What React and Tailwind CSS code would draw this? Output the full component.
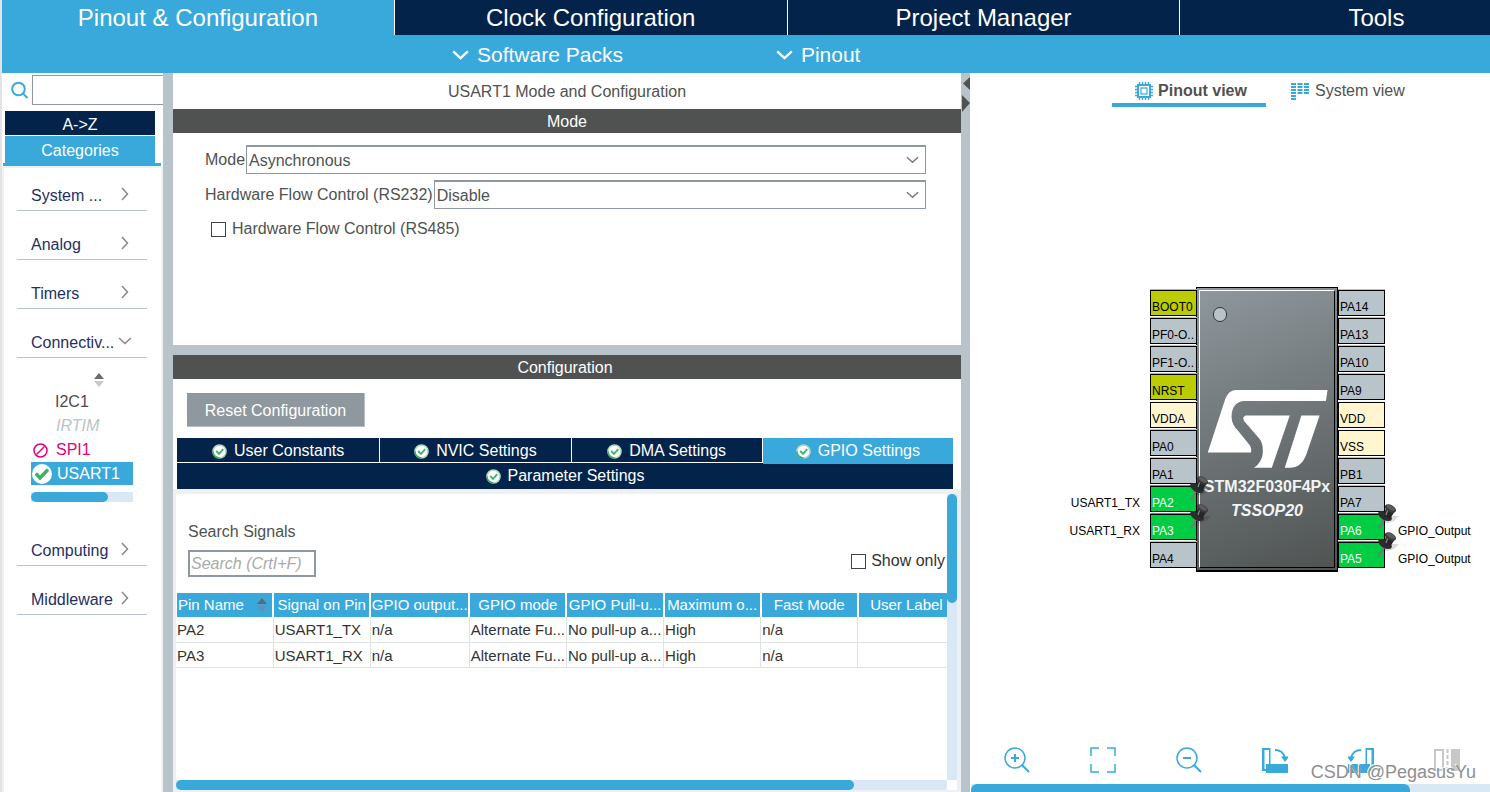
import { useState } from 'react'
import clsx from 'clsx'

const MAIN_TABS = ['Pinout & Configuration', 'Clock Configuration', 'Project Manager', 'Tools']

const CONFIG_TABS = ['User Constants', 'NVIC Settings', 'DMA Settings', 'GPIO Settings']

const COLUMNS = [
  'Pin Name', 'Signal on Pin', 'GPIO output...', 'GPIO mode',
  'GPIO Pull-u...', 'Maximum o...', 'Fast Mode', 'User Label',
]

const ROWS = [
  ['PA2', 'USART1_TX', 'n/a', 'Alternate Fu...', 'No pull-up a...', 'High', 'n/a', ''],
  ['PA3', 'USART1_RX', 'n/a', 'Alternate Fu...', 'No pull-up a...', 'High', 'n/a', ''],
]

const PIN_STYLE = {
  io:    'bg-[#b9c4ca] text-black shadow-[0_-1px_0_#b9c4ca]',
  reset: 'bg-[#bbcc00] text-black shadow-[0_-1px_0_#bbcc00]',
  power: 'bg-[#fff6cf] text-black shadow-[0_-1px_0_#fff6cf]',
  used:  'bg-[#00cc44] text-white shadow-[0_-1px_0_#00cc44]',
}

const LEFT_PINS = [
  { name: 'BOOT0', kind: 'reset' },
  { name: 'PF0-O..', kind: 'io' },
  { name: 'PF1-O..', kind: 'io' },
  { name: 'NRST', kind: 'reset' },
  { name: 'VDDA', kind: 'power' },
  { name: 'PA0', kind: 'io' },
  { name: 'PA1', kind: 'io' },
  { name: 'PA2', kind: 'used', signal: 'USART1_TX' },
  { name: 'PA3', kind: 'used', signal: 'USART1_RX' },
  { name: 'PA4', kind: 'io' },
]

const RIGHT_PINS = [
  { name: 'PA14', kind: 'io' },
  { name: 'PA13', kind: 'io' },
  { name: 'PA10', kind: 'io' },
  { name: 'PA9', kind: 'io' },
  { name: 'VDD', kind: 'power' },
  { name: 'VSS', kind: 'power' },
  { name: 'PB1', kind: 'io' },
  { name: 'PA7', kind: 'io' },
  { name: 'PA6', kind: 'used', signal: 'GPIO_Output' },
  { name: 'PA5', kind: 'used', signal: 'GPIO_Output' },
]

function Chevron({ className, dir = 'down', width = 1.5 }) {
  return (
    <svg viewBox="0 0 14 8" className={clsx(className, dir === 'right' && '-rotate-90')} fill="none" stroke="currentColor" strokeWidth={width}>
      <path d="M1 1 L7 6.5 L13 1" />
    </svg>
  )
}

function CheckBadge() {
  return (
    <svg viewBox="0 0 16 16" className="w-[15px] h-[15px] shrink-0">
      <circle cx="8" cy="8" r="7" fill="#fff" stroke="#a8dbb8" strokeWidth="1.6" />
      <path d="M8 15 A7 7 0 0 1 1 8" fill="none" stroke="#3aa866" strokeWidth="1.6" />
      <path d="M4.5 7.5 L7.5 10.5 L12 5.5" fill="none" stroke="#45b072" strokeWidth="2" />
    </svg>
  )
}

function SortArrows({ className, up = '#6b6b6b', down = '#c9c9c9' }) {
  return (
    <svg viewBox="0 0 12 14" className={className}>
      <path d="M6 0 L11 6 H1 Z" fill={up} />
      <path d="M6 14 L11 8 H1 Z" fill={down} />
    </svg>
  )
}

/* ---------- header ---------- */

function Header() {
  return (
    <header className="shrink-0 text-white">
      <nav className="flex h-[35px] overflow-hidden bg-[#39a9dc]">
        {MAIN_TABS.map((tab, i) => (
          <button
            key={tab}
            className={clsx(
              'w-[26.4%] shrink-0 border-r border-white text-[24px] leading-[35px]',
              i === 0 ? 'bg-[#39a9dc]' : 'bg-[#03234b]'
            )}
          >
            {tab}
          </button>
        ))}
      </nav>
      <div className="flex h-[38px] items-center gap-[153px] bg-[#39a9dc] pt-[2px] pl-[450px] text-[21px]">
        <button className="flex items-center gap-2">
          <Chevron className="w-[17px] h-[10px]" width={2} />
          Software Packs
        </button>
        <button className="flex items-center gap-2">
          <Chevron className="w-[17px] h-[10px]" width={2} />
          Pinout
        </button>
      </div>
    </header>
  )
}

/* ---------- category tree ---------- */

function Category({ label, open }) {
  return (
    <button className="mt-[15px] flex h-[34px] w-full items-center justify-between border-b border-[#b9c4ca] pr-4 pl-[14px] text-left text-[#1f2f66]">
      <span className="whitespace-nowrap pt-1">{label}</span>
      {open
        ? <Chevron className="-mr-[1px] h-[8px] w-[14px] shrink-0 text-[#888]" />
        : <Chevron dir="right" className="-mr-[1px] h-[8px] w-[14px] shrink-0 text-[#888]" />}
    </button>
  )
}

function Sidebar() {
  return (
    <aside className="flex w-[161px] shrink-0 flex-col overflow-hidden">
      <div className="flex h-[38px] items-start pt-[2px]">
        <svg viewBox="0 0 18 18" className="mt-[6px] ml-[9px] w-[18px] h-[18px] shrink-0" fill="none" stroke="#39a9dc" strokeWidth="2">
          <circle cx="7.5" cy="8" r="6.3" />
          <path d="M12 12.5 L16.5 17" />
        </svg>
        <input aria-label="Search peripherals" className="ml-[3px] h-[30px] w-[131px] min-w-0 border border-r-0 border-[#8f989e] px-1 outline-none" />
      </div>
      <div className="mr-[8px] ml-[3px] flex flex-col text-white">
        <button className="h-[24px] bg-[#03234b] pt-1 leading-5">A-&gt;Z</button>
        <button className="mt-px h-[27px] bg-[#39a9dc] pt-[2px]">Categories</button>
      </div>
      <div className="mr-[2px] ml-px h-[3px] bg-[#39a9dc]" />
      <div className="flex-1 border-x-2 border-t-2 border-[#eef0f2] pr-[14px] pl-[13px]">
        <div className="-mt-[6px]">
          <Category label="System ..." />
          <Category label="Analog" />
          <Category label="Timers" />
          <Category label="Connectiv..." open />
        </div>
        <div className="h-[159px] px-[14px] pt-[15px] text-[#4d4d4d]">
          <SortArrows className="ml-[62px] w-[12px] h-[14px]" />
          <ul className="mt-[3px] leading-6">
            <li className="pl-[24px]">I2C1</li>
            <li className="pl-[25px] text-[#b9c4ca] italic">IRTIM</li>
            <li className="flex items-center gap-2 pl-[2px] text-[#e6007e]">
              <svg viewBox="0 0 15 15" className="w-[15px] h-[15px]" fill="none" stroke="currentColor" strokeWidth="1.5">
                <circle cx="7.5" cy="7.5" r="6.5" />
                <path d="M3.5 11.5 L11.5 3.5" />
              </svg>
              SPI1
            </li>
            <li className="flex h-[23px] items-center gap-[5px] bg-[#39a9dc] pl-px text-white">
              <svg viewBox="0 0 20 20" className="w-5 h-5">
                <circle cx="10" cy="10" r="10" fill="#fff" />
                <path d="M3.8 9.5 L8 14 L16 5.5" fill="none" stroke="#3fae68" strokeWidth="3.4" />
              </svg>
              USART1
            </li>
          </ul>
          <div className="mt-[7px] h-[10px] bg-[#d9e8f5]">
            <div className="h-full w-3/4 rounded-full bg-[#39a9dc]" />
          </div>
        </div>
        <Category label="Computing" />
        <Category label="Middleware" />
      </div>
    </aside>
  )
}

/* ---------- mode + configuration ---------- */

function SelectRow({ id, label, value }) {
  return (
    <div className="flex h-[29px] items-center">
      <label htmlFor={id} className="pt-px pr-px whitespace-nowrap">{label}</label>
      <div className="relative flex-1">
        <select id={id} defaultValue={value} className="block h-[29px] w-full appearance-none border border-t-2 border-[#8f989e] bg-white pt-px pl-[2px] outline-none">
          <option>{value}</option>
        </select>
        <Chevron className="pointer-events-none absolute top-[11px] right-[7px] h-[8px] w-[13px] text-[#777]" />
      </div>
    </div>
  )
}

function ModePanel() {
  return (
    <section className="h-[272px] shrink-0 bg-white text-[#505251]">
      <h1 className="h-[36px] text-center leading-[38px]">USART1 Mode and Configuration</h1>
      <h2 className="h-[24px] bg-[#505251] text-center leading-[25px] text-white">Mode</h2>
      <div className="flex flex-col gap-[6px] pt-3 pr-[35px] pl-8">
        <SelectRow id="mode" label="Mode" value="Asynchronous" />
        <SelectRow id="rs232" label="Hardware Flow Control (RS232)" value="Disable" />
        <label className="mt-[2px] flex items-center gap-[6px] pl-[6px]">
          <input type="checkbox" className="h-[15px] w-[15px] appearance-none border border-[#444]" />
          Hardware Flow Control (RS485)
        </label>
      </div>
    </section>
  )
}

function SignalTable() {
  return (
    <table className="-ml-px w-[101.3%] table-fixed border-collapse text-[15px] text-[#333]">
      <thead>
        <tr className="h-[24px]">
          {COLUMNS.map((col, i) => (
            <th
              key={col}
              className={clsx(
                'border-x-2 border-white bg-[#39a9dc] p-0 leading-6 font-normal whitespace-nowrap text-white',
                i === 2 && 'w-[99px]'
              )}
            >
              {i === 0 ? (
                <span className="flex items-center justify-between pr-1 pl-px">
                  {col}
                  <SortArrows className="h-[14px] w-3" up="#5d6b75" down="#5f93b3" />
                </span>
              ) : col}
            </th>
          ))}
        </tr>
      </thead>
      <tbody>
        {ROWS.map(row => (
          <tr key={row[0]} className="h-[25px]">
            {row.map((cell, i) => (
              <td key={i} className="border-r border-b border-[#e0e3e5] pt-[2px] pr-0 pb-0 pl-px leading-[22px] whitespace-nowrap">{cell}</td>
            ))}
          </tr>
        ))}
      </tbody>
    </table>
  )
}

function ConfigPanel() {
  const [active, setActive] = useState('GPIO Settings')

  return (
    <section className="flex min-h-0 flex-1 flex-col bg-white">
      <h2 className="h-[24px] shrink-0 bg-[#505251] pr-1 text-center leading-[25px] text-white">Configuration</h2>
      <div className="px-[14px] pt-[14px]">
        <button className="h-[34px] w-[178px] border-r border-b border-[#b9bec2] bg-[#8f989e] pt-[2px] text-white">Reset Configuration</button>
      </div>

      <div className="mt-[11px] mr-[8px] ml-1 text-white">
        <div className="flex gap-px">
          {CONFIG_TABS.map((tab, i) => (
            <button
              key={tab}
              onClick={() => setActive(tab)}
              className={clsx(
                'flex items-center justify-center gap-[7px]',
                i === 0 ? 'flex-[202]' : 'flex-[190]',
                active === tab ? 'h-[26px] bg-[#39a9dc]' : 'h-[24px] bg-[#03234b] pt-[2px]'
              )}
            >
              <CheckBadge />
              {tab}
            </button>
          ))}
        </div>
        <button className="-mt-px flex h-[26px] w-full items-center justify-center gap-[7px] bg-[#03234b]">
          <CheckBadge />
          Parameter Settings
        </button>
      </div>

      <div className="flex min-h-0 flex-1 flex-col border-t-[5px] border-r-4 border-b-2 border-l-[3px] border-[#eef0f2]">
        <div className="flex min-h-0 flex-1">
          <div className="min-w-0 flex-1 overflow-hidden">
            <div className="px-3 pt-[26px] text-[#505251]">
              <label htmlFor="signal-search" className="block leading-6">Search Signals</label>
              <div className="mt-[6px] flex items-start justify-between">
                <input
                  id="signal-search"
                  placeholder="Search (CrtI+F)"
                  className="h-[27px] w-[128px] border-2 border-[#8f989e] px-px outline-none placeholder:text-[#aaa] placeholder:italic"
                />
                <label className="-mr-[10px] flex items-center gap-[5px] leading-[22px] text-[#333]">
                  <input type="checkbox" className="h-[15px] w-[15px] appearance-none border border-[#444]" />
                  Show only
                </label>
              </div>
            </div>
            <div className="mt-4">
              <SignalTable />
            </div>
          </div>
          <div className="w-[10px] bg-[#d9e8f5]">
            <div className="h-[109px] rounded-full bg-[#39a9dc]" />
          </div>
        </div>
        <div className="mr-[10px] h-[10px] shrink-0 bg-[#d9e8f5]">
          <div className="h-full w-[88%] rounded-full bg-[#39a9dc]" />
        </div>
      </div>
    </section>
  )
}

/* ---------- chip view ---------- */

function Pushpin() {
  return (
    <svg viewBox="0 0 24 26" className="absolute -top-[12px] left-[38px] z-10 h-[26px] w-6">
      <path d="M6 20 L13 13 L22 13 L17 18 L11 20 Z" fill="#000" opacity="0.14" />
      <path d="M2 25 L8 15" stroke="#777" strokeWidth="2" />
      <ellipse cx="8" cy="13" rx="7.5" ry="4" transform="rotate(30 8 13)" fill="#2c2c2c" />
      <path d="M7 13 L9 4 L18 8 L13 16 Z" fill="#262626" />
      <ellipse cx="13.5" cy="5.5" rx="6" ry="3.6" transform="rotate(30 13.5 5.5)" fill="#3a3a3a" />
      <ellipse cx="13.8" cy="4.8" rx="4.5" ry="2" transform="rotate(30 13.8 4.8)" fill="#5c5c5c" />
      <path d="M9 12 L10.5 7.5" stroke="#8a8a8a" strokeWidth="1.2" />
    </svg>
  )
}

function PinColumn({ pins }) {
  return (
    <div className="flex w-[47px] shrink-0 flex-col gap-[2px] pt-[3px]">
      {pins.map(pin => (
        <div key={pin.name} className={clsx('relative h-[26px] border border-black pt-[8px] pl-px text-[12px] leading-4 whitespace-nowrap', PIN_STYLE[pin.kind])}>
          {pin.name}
          {pin.signal && <Pushpin />}
        </div>
      ))}
    </div>
  )
}

function SignalColumn({ pins, className }) {
  return (
    <div className={clsx('flex flex-col gap-[2px] pt-[3px] text-[12px] leading-4 text-black', className)}>
      {pins.map(pin => (
        <div key={pin.name} className="h-[26px] pt-[9px]">{pin.signal}</div>
      ))}
    </div>
  )
}

function Chip() {
  return (
    <div className="flex">
      <SignalColumn pins={LEFT_PINS} className="flex-1 pr-[10px] text-right" />
      <PinColumn pins={LEFT_PINS} />
      <div className="-ml-px w-[142px] shrink-0 border border-black border-b-2 bg-[#7f888d] bg-linear-160 from-[#8f989e] to-[#4f5352] p-[2px]">
        <div className="relative flex h-[278px] flex-col items-center border border-t-white border-r-black border-b-black border-l-white pt-[99px]">
          <span className="absolute top-[16px] left-[13px] h-[15px] w-[14px] rounded-full border border-[#333] bg-[#b9c4ca]" />
          <svg viewBox="48 30 364 235" className="h-[78px] w-[121px]" fill="#fff">
            <path d="M50 218 L103 56 C111 38 122 30 136 30 H411 L406 63 H160 C135 63 120 85 122 115 C123 130 130 141 140 151 L176 196 C181 204 182 212 180 218 Z" />
            <path d="M165 107 H297 L243 264 H189 C205 255 217 235 216 212 C216 195 212 185 205 176 L160 124 C155 117 156 110 165 107 Z" />
            <path d="M332 107 H387 L349 218 C340 246 325 264 297 264 H282 Z" />
          </svg>
          <p className="mt-[7px] text-[16px] leading-6 font-bold text-[#f2f4f5]">STM32F030F4Px</p>
          <p className="text-[16px] leading-6 font-bold text-[#f2f4f5] italic">TSSOP20</p>
        </div>
      </div>
      <PinColumn pins={RIGHT_PINS} />
      <SignalColumn pins={RIGHT_PINS} className="w-[105px] shrink-0 pl-[13px]" />
    </div>
  )
}

function ChipIcon() {
  return (
    <svg viewBox="0 0 18 18" className="w-[18px] h-[18px]" fill="none" stroke="#39a9dc">
      <path d="M4.5 0 V18 M7.5 0 V18 M10.5 0 V18 M13.5 0 V18 M0 4.5 H18 M0 7.5 H18 M0 10.5 H18 M0 13.5 H18" strokeWidth="1.4" />
      <rect x="3" y="3" width="12" height="12" fill="#fff" strokeWidth="2" />
      <rect x="6" y="6" width="6" height="6" strokeWidth="1.2" />
    </svg>
  )
}

function SystemIcon() {
  return (
    <svg viewBox="0 0 18 18" className="w-[18px] h-[18px]" stroke="#39a9dc" strokeWidth="2" fill="none">
      <path d="M0 2 H18 M0 5 H18 M0 8 H18" strokeDasharray="5 1.5" />
      <path d="M6.5 11 H18" strokeDasharray="5 1.5" />
      <path d="M0 11 H5 M0 14 H5 M0 17 H5" />
    </svg>
  )
}

const TOOLS = [
  {
    label: 'Zoom in',
    art: (
      <>
        <circle cx="11" cy="11" r="10" />
        <path d="M11 7 V15 M7 11 H15" strokeWidth="2" />
        <path d="M18 18 L25 25" strokeWidth="2" />
      </>
    ),
  },
  {
    label: 'Best fit',
    art: <path d="M9 1 H1 V9 M17 1 H25 V9 M25 17 V25 H17 M9 25 H1 V17" />,
  },
  {
    label: 'Zoom out',
    art: (
      <>
        <circle cx="11" cy="11" r="10" />
        <path d="M7 11 H15" strokeWidth="2" />
        <path d="M18 18 L25 25" strokeWidth="2" />
      </>
    ),
  },
  {
    label: 'Rotate clockwise',
    art: (
      <>
        <path d="M0 1 H8.5 V17 H26 V26 H4 V24 H0 Z M2.5 3 V22 H4 V17 H7 V3 Z" fill="currentColor" fillRule="evenodd" stroke="none" />
        <path d="M13 3 C18 3 22 6 23 11" strokeWidth="2" />
        <path d="M19 9.5 H27 L23 15 Z" fill="currentColor" stroke="none" />
      </>
    ),
  },
  {
    label: 'Rotate counter-clockwise',
    art: (
      <>
        <path d="M26 1 H17.5 V17 H0 V26 H22 V24 H26 Z M23.5 3 V22 H22 V17 H19 V3 Z" fill="currentColor" fillRule="evenodd" stroke="none" />
        <path d="M13 3 C8 3 4 6 3 11" strokeWidth="2" />
        <path d="M-1 9.5 H7 L3 15 Z" fill="currentColor" stroke="none" />
      </>
    ),
  },
  {
    label: 'Flip',
    muted: true,
    art: (
      <>
        <rect x="1" y="3" width="8" height="20" strokeWidth="2" />
        <path d="M13.5 2 V24" strokeWidth="2" strokeDasharray="4 2" />
        <rect x="17" y="2" width="9" height="22" fill="currentColor" stroke="none" />
      </>
    ),
  },
]

function PinoutView() {
  return (
    <main className="relative flex min-w-0 flex-[520] flex-col bg-white text-[#505251]">
      <div className="flex h-[34px] shrink-0 pl-[142px]">
        <button className="flex w-[154px] items-center justify-center gap-[5px] border-b-4 border-[#39a9dc] pt-[6px] pl-1 font-bold">
          <ChipIcon />
          Pinout view
        </button>
        <button className="ml-[25px] flex items-center gap-[6px] pt-[2px] whitespace-nowrap">
          <SystemIcon />
          System view
        </button>
      </div>

      <div className="flex flex-1 flex-col justify-center pt-1">
        <Chip />
      </div>

      <div className="flex h-[37px] shrink-0 items-start overflow-hidden pl-1">
        {TOOLS.map(tool => (
          <button key={tool.label} aria-label={tool.label} className={clsx('flex w-[86px] shrink-0 justify-center', tool.muted ? 'text-[#c8c8c8]' : 'text-[#39a9dc]')}>
            <svg viewBox="0 0 26 26" className="w-[26px] h-[26px]" fill="none" stroke="currentColor" strokeWidth="1.5">{tool.art}</svg>
          </button>
        ))}
      </div>
      <div className="ml-px h-2 shrink-0 bg-[#d9e8f5]">
        <div className="h-full w-[84.6%] rounded-t-md bg-[#39a9dc]" />
      </div>

      <span className="absolute right-[14px] bottom-[6px] text-[18px] leading-7 text-[#8f8f8f] [text-shadow:-1px_-1px_0_#fff]">
        CSDN @PegasusYu
      </span>
    </main>
  )
}

export default function App() {
  return (
    <div className="flex h-screen flex-col overflow-hidden border-l-2 border-[#e3e3e3] bg-white font-['Liberation_Sans',Arial,sans-serif] text-[16px]">
      <Header />
      <div className="flex min-h-0 flex-1">
        <Sidebar />
        <div className="w-[10px] shrink-0 bg-[#b9c4ca]" />
        <div className="flex min-w-0 flex-[788] flex-col gap-[10px] bg-[#b9c4ca]">
          <ModePanel />
          <ConfigPanel />
        </div>
        <div className="w-[9px] shrink-0 bg-[#b9c4ca] pt-[3px]">
          <svg viewBox="0 0 9 36" className="h-9 w-[9px]" fill="#505251">
            <path d="M9 1 L2 7.5 L9 14 Z" />
            <path d="M1 19 L9 27 L1 36 Z" />
          </svg>
        </div>
        <PinoutView />
      </div>
    </div>
  )
}
